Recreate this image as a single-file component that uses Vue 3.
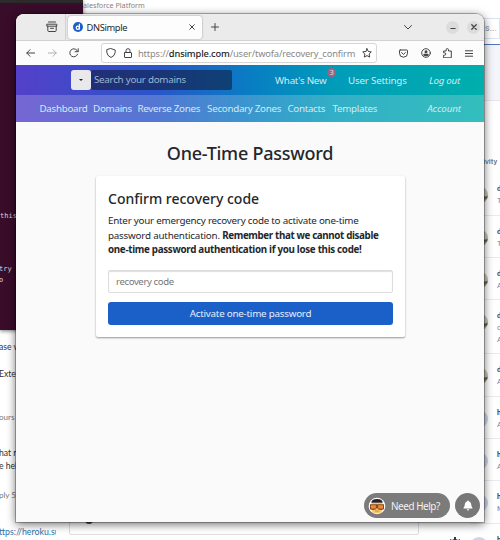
<template>
  <div class="desktop">
    <div class="terminal">
      <div class="term-top"></div>
      <p v-for="l in termLines" :key="l.text" :style="{ top: l.y + 'px' }">{{ l.text }}</p>
    </div>

    <div class="ticket">
      <p v-for="l in ticketLines" :key="l.text" :class="l.kind" :style="{ top: l.y + 'px' }">{{ l.text }}</p>
    </div>

    <div class="sheet">
      <span class="platform">alesforce Platform</span>
      <div class="sheet-card"></div>
      <i class="speck"></i>
    </div>

    <div class="activity">
      <div class="field">s...</div>
      <div class="band"></div>
      <span class="heading">ivity</span>
      <div v-for="a in activity" :key="a.y" class="entry" :style="{ top: a.y + 'px', height: a.h + 'px' }">
        <i :class="['avatar', { photo: a.photo }]"></i>
        <b>{{ a.name }}</b>
        <span v-for="(t, i) in a.lines" :key="i">{{ t }}</span>
      </div>
    </div>
    <svg class="gear" width="12" height="6" viewBox="0 0 12 6"><path d="M1 2l2 1 2-1V0h2v2l2 1 2-1v4H1z" fill="#303747" /></svg>

    <section class="window">
      <div class="tabs">
        <div class="tab-tools">
          <svg width="12" height="12" viewBox="0 0 12 12" class="line">
            <path d="M2.5 1h7M1.2 3.2h9.6v2H1.2zM1.8 5.2v4.3q0 1 1 1h6.4q1 0 1-1V5.2M4.5 7.3h3" />
          </svg>
        </div>
        <div class="tab">
          <svg width="10" height="10" viewBox="0 0 10 10">
            <circle cx="5" cy="5" r="5" fill="#1b60c8" />
            <circle cx="4.8" cy="5.8" r="1.6" fill="none" stroke="#fff" stroke-width="1.2" />
            <path d="M6.4 1.8v5.8" stroke="#fff" stroke-width="1.2" />
          </svg>
          <span class="tab-title">DNSimple</span>
          <svg class="line close" width="6" height="6" viewBox="0 0 6 6"><path d="M.7.7l4.6 4.6M5.3.7L.7 5.3" /></svg>
        </div>
        <svg class="line plus" width="8" height="8" viewBox="0 0 8 8"><path d="M4 .5v7M.5 4h7" /></svg>
        <svg class="line chevron" width="8" height="5" viewBox="0 0 8 5"><path d="M.5.5L4 4 7.5.5" /></svg>
        <button class="win-btn"><svg class="line" width="6" height="6" viewBox="0 0 6 6"><path d="M.8 4.5h4.4" /></svg></button>
        <button class="win-btn"><svg class="line" width="6" height="6" viewBox="0 0 6 6"><path d="M.8.8l4.4 4.4M5.2.8L.8 5.2" stroke-width="1.3" /></svg></button>
      </div>

      <div class="toolbar">
        <svg class="line back" width="9" height="8" viewBox="0 0 9 8"><path d="M8.6 4H.8M4 .7L.8 4 4 7.3" /></svg>
        <svg class="line forward" width="9" height="8" viewBox="0 0 9 8"><path d="M.4 4h7.8M5 .7L8.2 4 5 7.3" /></svg>
        <svg class="line reload" width="10" height="10" viewBox="0 0 10 10"><path d="M8.6 6.2A4 4 0 1 1 8 2.4L9 3.5M9.2.7v3H6.1" /></svg>
        <div class="url">
          <svg class="line" width="10" height="10" viewBox="0 0 10 10"><path d="M5 .6L9.2 2v2.2Q9 7.800 5 9.500 1 7.800.8 4.200V2z" /></svg>
          <svg class="line lock" width="8" height="10" viewBox="0 0 8 10"><path d="M1 4.500h6q.5 0 .5.5v4q0 .5-.5.5H1q-.5 0-.5-.5V5q0-.5.5-.5zM2 4.500V2.700a2 2 0 0 1 4 0v1.800" /></svg>
          <span class="address">https://<b>dnsimple.com</b>/user/twofa/recovery_confirm</span>
          <svg class="line star" width="10" height="10" viewBox="0 0 10 10"><path d="M5 .7l1.300 2.800 3 .4-2.200 2.100.6 3.100L5 7.600 2.300 9.100l.6-3.100L.7 3.900l3-.4z" /></svg>
        </div>
        <svg class="line pocket" width="9" height="9" viewBox="0 0 9 9"><path d="M1.200 1h6.600q.7 0 .7.7v2.500a4 4 0 0 1-8 0V1.700q0-.7.7-.7zM2.600 3.600L4.500 5.400l1.900-1.800" /></svg>
        <svg class="line account" width="10" height="10" viewBox="0 0 10 10"><circle cx="5" cy="5" r="4.300" /><circle cx="5" cy="3.700" r="1.500" class="solid" /><path class="solid" d="M2.400 7.500V6.600q0-.8.800-.8h3.600q.8 0 .8.800v.9Q5 9 2.400 7.500z" /></svg>
        <svg class="line puzzle" width="9" height="10" viewBox="0 0 9 10"><path d="M.6 9.400V7.200h1a1.200 1.200 0 0 0 0-2.400h-1V3h2.500V1.800a1.200 1.200 0 0 1 2.400 0V3H8.300v6.400z" /></svg>
        <svg class="line menu" width="8" height="7" viewBox="0 0 8 7"><path d="M.3.8h7.400M.3 3.500h7.400M.3 6.200h7.400" /></svg>
      </div>

      <header class="brand">
        <div class="top-row">
          <button class="scope"><i></i></button>
          <div class="search"><span>Search your domains</span></div>
          <nav>
            <a class="news">What's New<sup>3</sup></a>
            <a class="settings">User Settings</a>
            <a class="logout">Log out</a>
          </nav>
        </div>
        <nav class="sub-row">
          <a v-for="n in nav" :key="n.label" :style="{ width: n.w + 'px' }">{{ n.label }}</a>
          <a class="acct">Account</a>
        </nav>
      </header>

      <main>
        <h1>One-Time Password</h1>
        <form class="card" @submit.prevent>
          <h2>Confirm recovery code</h2>
          <p>
            <span class="l1">Enter your emergency recovery code to activate one-time</span><br />
            <span class="l2">password authentication. </span><b class="l2b">Remember that we cannot disable</b><br />
            <b class="l3">one-time password authentication if you lose this code!</b>
          </p>
          <input v-model="code" placeholder="recovery code" />
          <button class="submit">Activate one-time password</button>
        </form>
      </main>

      <div class="floating">
        <button class="help">
          <svg width="18" height="18" viewBox="0 0 18 18">
            <circle cx="9" cy="9" r="8.300" fill="#fff" />
            <path d="M3.500 6h11v7q-1 3.500-5.500 3.500T3.500 13z" fill="#f8c768" />
            <path d="M3.300 5.800q0-3.800 5.700-3.800t5.700 3.800z" fill="#29231f" />
            <path d="M2 7.200h14v5q-3.500 1.500-6 0L9 10.800l-1 1.400q-3 1.500-6 0z" fill="#8a4a20" />
            <path d="M3 8.200h4.800v3.200H3zM10.200 8.200H15v3.200h-4.800z" fill="#f08a35" />
            <path d="M7 14h4" stroke="#d08a3c" />
          </svg>
          <span>Need Help?</span>
        </button>
        <button class="bell">
          <svg width="10" height="11" viewBox="0 0 10 11"><path d="M5 .4q.8 0 .8.9 2.400.6 2.400 3.300 0 2 1.300 3.400v.6H.5V8q1.300-1.400 1.300-3.400Q1.800 1.900 4.200 1.300 4.200.4 5 .4zM3.700 9.300h2.600Q6 10.600 5 10.600T3.700 9.300z" fill="#fff" /></svg>
        </button>
      </div>
    </section>
  </div>
</template>

<script setup>
import { ref } from 'vue'

const code = ref('')

const nav = [
  { label: 'Dashboard', w: 47.3 },
  { label: 'Domains', w: 38.1 },
  { label: 'Reverse Zones', w: 63.3 },
  { label: 'Secondary Zones', w: 74 },
  { label: 'Contacts', w: 38.8 },
  { label: 'Templates', w: 46 },
]

const termLines = [
  { text: 'this', y: 211 },
  { text: 'try', y: 264 },
  { text: 'o', y: 275 },
]

const ticketLines = [
  { text: 'ase v', y: 340 },
  { text: 'Exter', y: 367 },
  { text: 'ours', y: 410, kind: 'muted' },
  { text: 'hat re', y: 446 },
  { text: 'e hel', y: 459 },
  { text: 'ply 5', y: 488, kind: 'muted' },
  { text: 'ttps://heroku.su', y: 525, kind: 'link' },
]

const activity = [
  { y: 174, h: 42, name: 'd', lines: ['T'], photo: true },
  { y: 217, h: 41, name: 'd', lines: ['T'], photo: true },
  { y: 259, h: 41, name: 'd', lines: ['A'], photo: true },
  { y: 301, h: 53, name: 'd', lines: ['c', 'A'], photo: true },
  { y: 355, h: 42, name: 'd', lines: ['A'], photo: true },
  { y: 398, h: 41, name: 'h', lines: ['A'] },
  { y: 440, h: 41, name: 'h', lines: ['A'] },
  { y: 482, h: 42, name: 'h', lines: ['M'] },
  { y: 525, h: 41, name: 'h', lines: ['A'] },
]
</script>

<style>
body { overflow: hidden; }
</style>

<style scoped>
* { box-sizing: border-box; }
.desktop {
  position: relative;
  width: 500px;
  height: 540px;
  overflow: hidden;
  background: #fff;
  font-family: "Noto Sans", sans-serif;
  color: #24272b;
}
p, h1, h2 { margin: 0; }
button { border: 0; padding: 0; font: inherit; color: inherit; }
svg { display: block; flex: none; }
.line { fill: none; stroke: #444; stroke-width: 1; stroke-linejoin: round; stroke-linecap: round; }
.solid { fill: #444; stroke: none; }

/* windows in the back */
.terminal { position: absolute; left: 0; top: 0; width: 83px; height: 330px; background: #390c2a; box-shadow: 0 1px 4px #0008; }
.term-top { height: 3px; background: #2d2a2c; }
.terminal p { position: absolute; left: -1px; font: 7px/11px "DejaVu Sans Mono", monospace; color: #ddd3da; }
.terminal p:first-of-type { left: 0; }
.ticket { position: absolute; left: 0; top: 330px; width: 56px; height: 210px; overflow: hidden; }
.ticket p { position: absolute; left: -1px; margin-top: -330px; white-space: nowrap; font: 8.6px/14px Lato, sans-serif; color: #303235; }
.ticket .muted { color: #777; font-size: 8px; }
.ticket .link { color: #2a73aa; font-size: 8.8px; }
.sheet { position: absolute; left: 83px; top: 0; width: 417px; height: 540px; }
.platform { position: absolute; left: 0; top: -1px; font-size: 7.2px; line-height: 12px; color: #8b8379; }
.sheet-card { position: absolute; left: -14px; top: 500px; width: 350px; height: 35px; border: 1px solid #ddd; border-radius: 2px; }
.speck { position: absolute; left: 2px; top: 516px; width: 8px; height: 8px; border-radius: 50%; background: #4d4930; }
.activity { position: absolute; left: 470px; top: 0; width: 30px; height: 540px; overflow: hidden; font: 7.5px/11px Roboto, sans-serif; }
.field { position: absolute; top: 18px; left: 0; width: 30px; height: 21px; padding: 4px 0 0 14px; border: 1px solid #dbe5f2; color: #7791b1; font-size: 9px; }
.band { position: absolute; top: 44px; width: 30px; height: 57px; background: #f4f5fa; border-top: 1px solid #5075c0; border-bottom: 1px solid #e4e6ec; }
.heading { position: absolute; left: 13px; top: 156px; font-size: 8px; color: #4b5264; }
.entry { position: absolute; left: 0; width: 30px; padding: 9px 0 0 27px; border-bottom: 1px solid #e8eaf0; }
.entry b, .entry span { display: block; height: 12px; color: #3f4c63; }
.entry span { color: #7382a0; }
.avatar { position: absolute; left: 0; top: 12px; width: 18px; height: 18px; border-radius: 50%; background: #ccd5e9; }
.avatar.photo { background: linear-gradient(170deg, #c9c3b6 58%, #5d5744 66%, #b4b3a1 84%); }
.gear { position: absolute; left: 449px; top: 537px; }

/* browser window */
.window {
  position: absolute;
  left: 16px;
  top: 14px;
  width: 468px;
  height: 508px;
  display: flex;
  flex-direction: column;
  overflow: hidden;
  background: #fafafa;
  border-radius: 8px 8px 0 0;
  box-shadow: 0 0 0 1px #0004, 0 2px 10px #0009;
}
.tabs { height: 27px; flex: none; display: flex; align-items: center; background: #ebebeb; border-bottom: 1px solid #d2d2d2; }
.tab-tools { width: 50px; height: 26px; padding: 7px 0 0 30px; border-right: 1px solid #d2d2d2; }
.tab { width: 134px; height: 23px; margin-left: 2px; padding: 0 7px 0 5px; display: flex; align-items: center; border-radius: 3px; background: #fdfdfd; box-shadow: 0 0 2px #0006; }
.tab-title { margin-left: 3.5px; font-size: 9.3px; letter-spacing: -.35px; }
.close { margin-left: auto; }
.plus { margin-left: 9px; }
.chevron { margin-left: 185px; }
.win-btn { width: 13px; height: 13px; margin-left: 34px; border-radius: 50%; background: #dcdcdc; display: flex; align-items: center; justify-content: center; }
.win-btn + .win-btn { margin-left: 8px; }
.toolbar { height: 24px; flex: none; display: flex; align-items: center; background: #fcfcfc; padding: 0 11px 0 10px; }
.forward { margin-left: 13px; opacity: .4; }
.reload { margin-left: 12px; }
.url { width: 276px; height: 20px; margin-left: 22px; padding: 0 4px; display: flex; align-items: center; border: 1px solid #d6d6d6; border-radius: 3px; background: #fff; }
.lock { margin-left: 8px; }
.address { margin-left: 6px; font-size: 9.3px; letter-spacing: -.15px; color: #888; white-space: nowrap; }
.address b { font-weight: 500; color: #222; }
.star { margin-left: auto; }
.pocket { margin-left: 22px; }
.account { margin-left: 13px; }
.puzzle { margin-left: 12px; }
.menu { margin-left: 13px; }

.brand { height: 57px; flex: none; background: linear-gradient(90deg, #5440c8 0, #2956c8 30%, #087fc2 51%, #009cb9 68%, #00afad 100%); color: #d0eaf2; font-size: 9.8px; letter-spacing: -.27px; }
.top-row { height: 30px; display: flex; align-items: center; padding-left: 55px; }
.scope { width: 20px; height: 20px; border-radius: 3px; background: #e9e9eb; display: flex; align-items: center; }
.scope i { display: block; margin: 1px auto 0; width: 0; border: 2px solid transparent; border-top-color: #222; }
.search { width: 141px; height: 20px; padding-left: 3px; line-height: 20px; background: rgba(15, 25, 55, .56); border-radius: 2px; color: #9fb6d1; white-space: nowrap; }
.top-row nav { flex: 1; display: flex; white-space: nowrap; padding-left: 43px; }
.news { position: relative; width: 52px; }
.news sup { position: absolute; left: 52px; top: -6px; width: 9px; height: 9px; border-radius: 50%; background: #a0627e; font-size: 7px; line-height: 9px; text-align: center; }
.settings { width: 59px; margin-left: 21px; letter-spacing: -.2px; }
.logout { margin-left: 22px; font-style: italic; }
.sub-row { height: 27px; display: flex; align-items: center; gap: 6.3px; padding: 0 23px 0 23.5px; background: rgba(255, 255, 255, .2); white-space: nowrap; letter-spacing: -.3px; }
.sub-row a { flex: none; }
.acct { margin-left: auto; font-style: italic; letter-spacing: -.1px; }

main { display: flex; flex-direction: column; align-items: center; padding-top: 17px; }
h1 { font-size: 18px; line-height: 28px; font-weight: 500; letter-spacing: -.25px; }
.card { width: 309px; height: 161px; margin: 9px 0 0 1px; padding: 13px 12px; display: flex; flex-direction: column; background: #fff; border-radius: 2px; box-shadow: 0 1px 2px #0006; }
h2 { font-size: 14px; line-height: 20px; font-weight: 500; white-space: nowrap; }
.card p { margin-top: 5px; font-size: 9.8px; line-height: 14.5px; height: 43px; white-space: nowrap; }
.l1 { letter-spacing: -.23px; }
.l2 { letter-spacing: -.2px; }
.l2b { letter-spacing: -.37px; }
.l3 { letter-spacing: -.31px; }
.card input { width: 285px; height: 23px; flex: none; margin-top: 13px; padding: 0 7px; border: 1px solid #ddd; border-radius: 2px; box-shadow: inset 0 1px 1px #0002; font: 9.6px "Noto Sans", sans-serif; letter-spacing: -.38px; }
.card input::placeholder { color: #777; }
.submit { height: 23px; flex: none; margin-top: 9px; border-radius: 3px; background: #1b60c9; color: #e4eefc; font-size: 9.8px; letter-spacing: -.23px; }

.floating { position: absolute; right: 4px; bottom: 4px; display: flex; gap: 5px; color: #f2f2f2; }
.help { width: 86px; height: 25px; border-radius: 13px; background: #7b7b7b; padding-left: 4px; display: flex; align-items: center; gap: 5px; font-size: 9.9px; letter-spacing: -.42px; white-space: nowrap; }
.bell { width: 25px; height: 25px; border-radius: 50%; background: #777; display: flex; align-items: center; justify-content: center; }
</style>
